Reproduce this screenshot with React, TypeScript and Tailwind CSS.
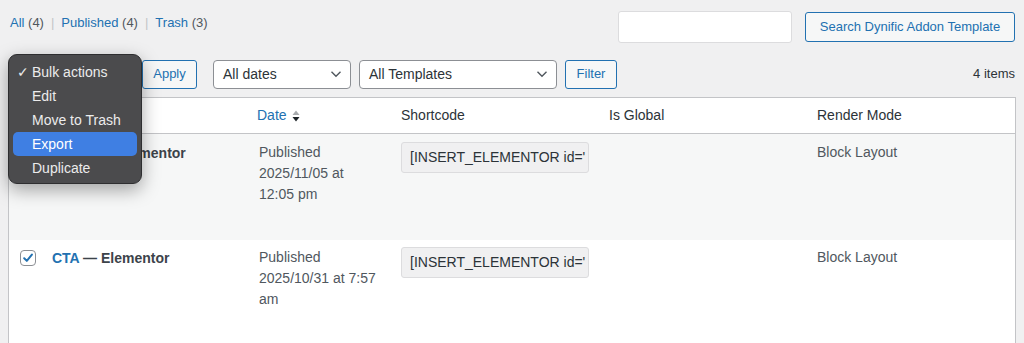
import React from "react";

const Chevron = () => (
  <svg width="12" height="8" viewBox="0 0 12 8" className="shrink-0">
    <path d="M1.5 1.8 L6 6.2 L10.5 1.8" fill="none" stroke="#50575e" strokeWidth="1.4" />
  </svg>
);

function Select({ label, w }: { label: string; w: string }) {
  return (
    <div className={`${w} h-[29px] bg-white border border-[#8c8f94] rounded-[4px] flex items-center justify-between pl-[9px] pr-[8px] text-[14px] text-[#2c3338]`}>
      <span>{label}</span>
      <Chevron />
    </div>
  );
}

function Btn({ label, w }: { label: string; w: string }) {
  return (
    <div className={`${w} h-[29px] bg-[#f6f7f7] border border-[#2271b1] rounded-[3px] flex items-center justify-center text-[13px] text-[#2271b1]`}>
      {label}
    </div>
  );
}

const cols = "grid grid-cols-[33px_206px_143px_208px_208px_1fr]";

function Shortcode() {
  return (
    <div className="w-[188px] h-[31px] bg-[#f0f0f1] border border-[#dcdcde] rounded-[3px] flex items-center pl-[8px] overflow-hidden whitespace-nowrap text-[14px] text-[#2c3338]">
      [INSERT_ELEMENTOR id='
    </div>
  );
}

function Checkbox({ checked }: { checked?: boolean }) {
  return (
    <div className="w-[16px] h-[16px] bg-white border border-[#8c8f94] rounded-[4px] flex items-center justify-center">
      {checked && (
        <svg width="12" height="12" viewBox="0 0 12 12">
          <path d="M2.2 6.3 L4.8 8.9 L9.9 2.6" fill="none" stroke="#2271b1" strokeWidth="2" strokeLinecap="round" strokeLinejoin="round" />
        </svg>
      )}
    </div>
  );
}

export default function App() {
  return (
    <div
      className="relative w-[1024px] h-[343px] overflow-hidden bg-[#f0f0f1] px-2"
      style={{ fontFamily: '"Liberation Sans", Arial, sans-serif' }}
    >
      {/* top row */}
      <div className="flex items-start justify-between pt-[11px] pr-[1px]">
        <div className="pl-[2px] pt-[3px] text-[13px] text-[#50575e] leading-[18px]">
          <span className="text-[#2271b1]">All</span> (4)<span className="text-[#c3c4c7] px-[7px]">|</span>
          <span className="text-[#2271b1]">Published</span> (4)<span className="text-[#c3c4c7] px-[7px]">|</span>
          <span className="text-[#2271b1]">Trash</span> (3)
        </div>
        <div className="flex items-center gap-[13px]">
          <div className="w-[174px] h-[32px] bg-white border border-[#dcdcde] rounded-[3px]" />
          <Btn label="Search Dynific Addon Template" w="w-[210px] h-[30px]" />
        </div>
      </div>

      {/* tablenav */}
      <div className="flex items-center mt-[16px] h-[30px] pr-[1px]">
        <div className="flex items-center gap-[8px]">
          <div className="w-[126px] h-[29px] bg-white border border-[#8c8f94] rounded-[4px]" />
          <Btn label="Apply" w="w-[55px]" />
          <div className="ml-[8px]">
            <Select label="All dates" w="w-[138px]" />
          </div>
          <Select label="All Templates" w="w-[198px]" />
          <Btn label="Filter" w="w-[52px]" />
        </div>
        <div className="ml-auto text-[13px] text-[#2c3338]">4 items</div>
      </div>

      {/* table */}
      <div className="mt-[8px] w-[1008px] border border-[#c3c4c7] bg-white">
        <div className={`${cols} h-[36px] items-center border-b border-[#c3c4c7] text-[14px] text-[#2c3338]`}>
          <div className="pl-[11px]"><Checkbox /></div>
          <div className="pl-[10px]"></div>
          <div className="pl-[9px] flex items-center gap-[5px]">
            <span className="text-[#2271b1]">Date</span>
            <svg width="8" height="14" viewBox="0 0 8 14">
              <path d="M0.5 6 L4 1.5 L7.5 6 Z" fill="#a7aaad" />
              <path d="M0.5 8 L4 12.5 L7.5 8 Z" fill="#1d2327" />
            </svg>
          </div>
          <div className="pl-[10px]">Shortcode</div>
          <div className="pl-[10px]">Is Global</div>
          <div className="pl-[10px]">Render Mode</div>
        </div>

        <div className={`${cols} h-[106px] bg-[#f6f7f7] text-[14px] leading-[21px] text-[#50575e] pt-[8px]`}>
          <div className="pl-[11px] pt-[3px]"><Checkbox /></div>
          <div className="pl-[10px] pt-[1px] font-bold text-[#3c434a]">
            <span className="text-[#2271b1]">Footer</span> — Elementor
          </div>
          <div className="pl-[11px] pr-[10px]">Published 2025/11/05 at 12:05 pm</div>
          <div className="pl-[10px]"><Shortcode /></div>
          <div />
          <div className="pl-[10px]">Block Layout</div>
        </div>

        <div className={`${cols} h-[120px] bg-white text-[14px] leading-[21px] text-[#50575e] pt-[7px]`}>
          <div className="pl-[11px] pt-[3px]"><Checkbox checked /></div>
          <div className="pl-[10px] pt-[1px] font-bold text-[#3c434a]">
            <span className="text-[#2271b1]">CTA</span> — Elementor
          </div>
          <div className="pl-[11px] pr-[8px]">Published 2025/10/31 at 7:57 am</div>
          <div className="pl-[10px]"><Shortcode /></div>
          <div />
          <div className="pl-[10px]">Block Layout</div>
        </div>
      </div>

      {/* bulk actions popup menu */}
      <div className="absolute left-[8px] top-[54px] w-[134px] h-[130px] rounded-[9px] bg-[#4b4b4d] border border-[#2e2e30] shadow-[0_6px_18px_rgba(0,0,0,0.35)] pt-[5px] px-[4px] text-[14px] text-[#ececec]">
        {[
          { t: "Bulk actions", check: true },
          { t: "Edit" },
          { t: "Move to Trash" },
          { t: "Export", active: true },
          { t: "Duplicate" },
        ].map((it) => (
          <div
            key={it.t}
            className={`relative h-[24px] flex items-center pl-[19px] rounded-[5px] ${it.active ? "bg-[#3f7fe3] text-white" : ""}`}
          >
            {it.check && <span className="absolute left-[4px] text-[14px]">✓</span>}
            {it.t}
          </div>
        ))}
      </div>
    </div>
  );
}
